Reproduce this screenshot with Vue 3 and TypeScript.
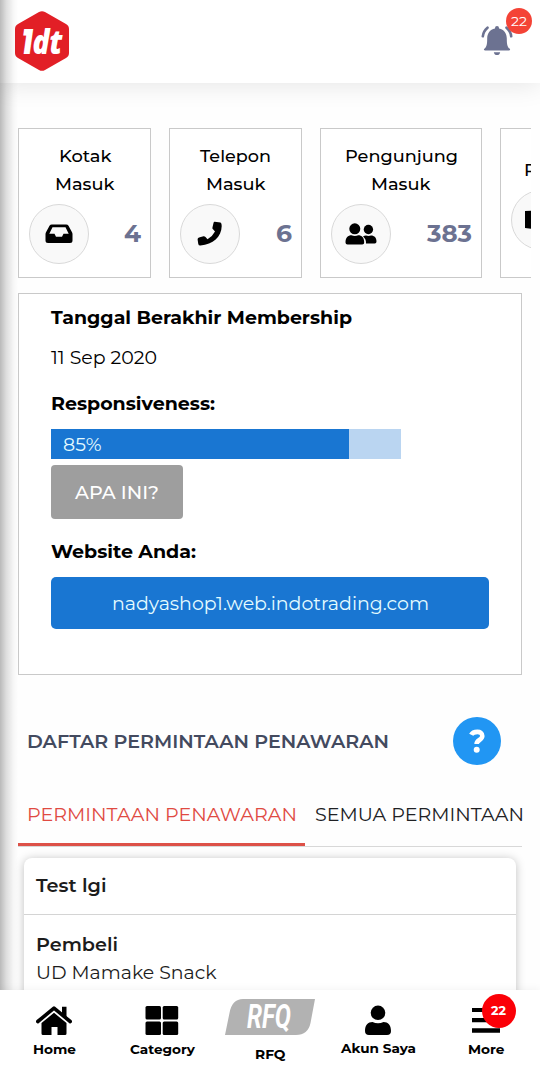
<script setup lang="ts">
import { h } from 'vue'

interface FitProps {
  text: string
  width: number
  size?: number
  weight?: number
  line?: number
}

const FitText = (p: FitProps) => {
  const size = Number(p.size ?? 18.6)
  const line = Number(p.line ?? 24)
  return h('svg', { width: p.width, height: line, class: 'fit' }, [
    h('text', {
      x: 0,
      y: line / 2 + size * 0.35,
      textLength: p.width,
      lengthAdjust: 'spacingAndGlyphs',
      'font-size': size,
      'font-weight': p.weight ?? 400,
      fill: 'currentColor',
    }, p.text),
  ])
}
FitText.props = ['text', 'width', 'size', 'weight', 'line']

interface Stat {
  icon: 'inbox' | 'phone' | 'users' | 'box'
  lines: { text: string; width: number }[]
  value: string
  valueWidth: number
}

const stats: Stat[] = [
  { icon: 'inbox', lines: [{ text: 'Kotak', width: 52.5 }, { text: 'Masuk', width: 59.5 }], value: '4', valueWidth: 17 },
  { icon: 'phone', lines: [{ text: 'Telepon', width: 71 }, { text: 'Masuk', width: 59.5 }], value: '6', valueWidth: 16 },
  { icon: 'users', lines: [{ text: 'Pengunjung', width: 113 }, { text: 'Masuk', width: 59.5 }], value: '383', valueWidth: 45 },
  { icon: 'box', lines: [{ text: 'Produk', width: 65 }], value: '', valueWidth: 0 },
]

const responsiveness = 85
</script>

<template>
  <div class="screen">
    <header class="topbar">
      <svg class="logo" width="56" height="62" viewBox="0 0 56 62">
        <path d="M25 2 Q28 .3 31 2 L52 14 Q55 15.700 55 19 V43 Q55 46.300 52 48 L31 60 Q28 61.700 25 60 L4 48 Q1 46.300 1 43 V19 Q1 15.700 4 14 Z" fill="#e21f26" />
        <text x="8" y="44" textLength="10.500" lengthAdjust="spacingAndGlyphs" class="logo-text logo-one">1</text>
        <text x="18.500" y="44" textLength="30" lengthAdjust="spacingAndGlyphs" class="logo-text">dt</text>
      </svg>
      <div class="bell">
        <svg width="32" height="30" viewBox="0 0 32 30">
          <path d="M14 2.500V2a2 2 0 0 1 4 0v.5c5.200 1.200 7.800 5 7.800 10 0 7 .8 8.500 2.900 10.300.8.700.4 1.700-.7 1.700H4c-1.100 0-1.500-1-.7-1.700 2.100-1.800 2.900-3.300 2.900-10.300 0-5 2.600-8.800 7.800-10Z" fill="#6c7291" />
          <path d="M12.800 26.200h6.400c-.4 2-1.600 2.900-3.200 2.900s-2.800-.9-3.200-2.900Z" fill="#6c7291" />
          <path d="M6.500 1.700C3.700 4 2.200 6.500 1.800 10.300M25.500 1.700c2.800 2.300 4.300 4.800 4.700 8.600" fill="none" stroke="#6c7291" stroke-width="2.600" stroke-linecap="round" />
        </svg>
        <span class="bell-count"><FitText text="22" :width="16" :size="13.500" :line="18" /></span>
      </div>
    </header>

    <section class="stats">
      <article v-for="(s, i) in stats" :key="i" class="stat" :class="`stat-${s.icon}`">
        <FitText v-for="l in s.lines" :key="l.text" :text="l.text" :width="l.width" :size="17.500" :weight="500" :line="28" />
        <div class="stat-foot">
          <span class="disc">
            <svg v-if="s.icon === 'inbox'" width="28" height="20" viewBox="0 0 28 20">
              <path fill-rule="evenodd" d="M6.800.5h14.400q1.500 0 2.300 1.200L27 8.200q.5.900.5 2V16.500q0 2.500-2.500 2.500H3Q.5 19 .5 16.500V10.200q0-1.100.5-2L4.500 1.700Q5.300.5 6.800.5ZM7.500 3.300 4.300 9.800H9.500L11 12.700h6l1.500-2.900h5.200L20.500 3.300Z" />
            </svg>
            <svg v-else-if="s.icon === 'phone'" width="26" height="26" viewBox="0 0 26 26">
              <path d="M17.700.8 23.500 1.500Q24.800 2 24.700 5C24.500 16 16 23.500 3.500 24.500Q1.500 24.600 1.300 23L.6 18.500Q.5 17 2 16.500L6.500 15.200Q7.500 15 8.500 16L10.500 18.200Q15.500 15.500 18 10.500L16 8.300Q15 7.500 15.500 6.200L16.500 2Q16.800.7 17.700.8Z" />
            </svg>
            <svg v-else-if="s.icon === 'users'" width="32" height="22" viewBox="0 0 32 22">
              <circle cx="9.800" cy="5.800" r="5.500" />
              <circle cx="23.400" cy="6.500" r="4.700" />
              <path d="M.5 19.500C.5 14.700 3 12.300 6.500 12.300c2 .9 4.700.9 6.700 0 3.600 0 6 2.400 6 7.200q0 2-2 2H2.500q-2 0-2-2Z" />
              <path d="M18 13.600c1-.7 1.900-1 3-1 1.600.6 3.400.6 5 0 3.400 0 5.500 2.300 5.500 6q0 2-1.800 2H21q.3-4.500-3-7Z" />
            </svg>
            <svg v-else width="32" height="20" viewBox="0 0 32 20">
              <path d="M0 1 16 0 32 1V18L16 20 0 18Z" />
            </svg>
          </span>
          <FitText v-if="s.value" class="value" :text="s.value" :width="s.valueWidth" :size="24" :weight="700" :line="28" />
        </div>
      </article>
    </section>

    <section class="member">
      <FitText text="Tanggal Berakhir Membership" :width="301" :weight="700" />
      <FitText class="date" text="11 Sep 2020" :width="106" />
      <FitText class="resp" text="Responsiveness:" :width="164" :weight="700" />
      <div class="bar">
        <div class="bar-fill" :style="{ width: responsiveness + '%' }">
          <FitText :text="responsiveness + '%'" :width="38.500" />
        </div>
      </div>
      <button class="what"><FitText text="APA INI?" :width="84" :weight="500" /></button>
      <FitText class="site" text="Website Anda:" :width="145" :weight="700" />
      <a class="link"><FitText text="nadyashop1.web.indotrading.com" :width="317" /></a>
    </section>

    <section class="requests">
      <div class="heading">
        <FitText text="DAFTAR PERMINTAAN PENAWARAN" :width="362" :size="19" :weight="650" />
        <span class="help">
          <svg width="18" height="26" viewBox="0 0 18 26">
            <path d="M3.200 6.800C5 3.300 14.300 2 14.300 8c0 4-5.700 4-5.700 8" fill="none" stroke="#fff" stroke-width="4.600" />
            <circle cx="8.700" cy="21.800" r="3" fill="#fff" />
          </svg>
        </span>
      </div>
      <nav class="tabs">
        <span class="tab active"><FitText text="PERMINTAAN PENAWARAN" :width="270" :weight="450" /></span>
        <span class="tab"><FitText text="SEMUA PERMINTAAN" :width="209" :weight="450" /></span>
      </nav>
      <article class="request">
        <div class="request-title"><FitText text="Test lgi" :width="70.500" :weight="650" /></div>
        <div class="request-body">
          <FitText text="Pembeli" :width="82" :weight="650" :line="28" />
          <FitText text="UD Mamake Snack" :width="180.500" :weight="400" :line="28" />
        </div>
      </article>
    </section>

    <div class="edge"></div>

    <nav class="dock">
      <a class="dock-item">
        <svg width="36" height="30" viewBox="0 0 36 30">
          <path d="M1.800 15.500 18 2.200 34.200 15.500" fill="none" stroke="#000" stroke-width="3.600" stroke-linecap="round" stroke-linejoin="round" />
          <path d="M26 .8h4.500v12l-4.500-4Z" />
          <path d="M18 6.800 30.500 17V27.500q0 1.500-1.500 1.500H21.500V21h-6v8H7q-1.500 0-1.500-1.500V17Z" />
        </svg>
        <FitText text="Home" :width="43" :size="13.200" :weight="700" :line="18" />
      </a>
      <a class="dock-item">
        <svg width="36" height="30" viewBox="0 0 36 30">
          <rect x="1.500" y="0" width="15.500" height="13.500" rx="1.500" /><rect x="18.700" y="0" width="15.500" height="13.500" rx="1.500" />
          <rect x="1.500" y="15.500" width="15.500" height="13.500" rx="1.500" /><rect x="18.700" y="15.500" width="15.500" height="13.500" rx="1.500" />
        </svg>
        <FitText text="Category" :width="65" :size="13.200" :weight="700" :line="18" />
      </a>
      <a class="dock-item rfq">
        <svg width="90" height="37" viewBox="0 0 90 37">
          <path d="M18 0H90L85.500 24Q83 36 71 36H0L4.500 14Q7 0 18 0Z" fill="#b2b2b2" />
          <text x="22" y="28.500" textLength="44" lengthAdjust="spacingAndGlyphs" class="rfq-text">RFQ</text>
        </svg>
        <FitText text="RFQ" :width="30.500" :size="13.200" :weight="700" :line="18" />
      </a>
      <a class="dock-item akun">
        <svg width="28" height="31" viewBox="0 0 28 31">
          <circle cx="14" cy="7.800" r="7.300" />
          <path d="M1 26c0-6 3-9 7.500-9 3.500 1.600 7.500 1.600 11 0 4.500 0 7.500 3 7.500 9q0 4-4 4H5q-4 0-4-4Z" />
        </svg>
        <FitText text="Akun Saya" :width="75" :size="13.200" :weight="700" :line="18" />
      </a>
      <a class="dock-item">
        <svg width="28" height="30" viewBox="0 0 28 30">
          <path d="M0 2h28v4H0ZM0 12h28v4.200H0ZM0 22.200h28v4.500H0Z" />
        </svg>
        <span class="more-count"><FitText text="22" :width="15" :size="12" :weight="700" :line="18" /></span>
        <FitText text="More" :width="36.500" :size="13.200" :weight="700" :line="18" />
      </a>
    </nav>
  </div>
</template>

<style>
body { margin: 0; background: #fff; overflow: hidden; }
.fit { display: block; flex: none; overflow: visible; }
</style>

<style scoped>
.screen {
  position: relative;
  width: 540px;
  height: 1073px;
  overflow: hidden;
  box-sizing: border-box;
  background: #fefefe;
  color: #000;
  font-family: Montserrat, Inter, "Liberation Sans", sans-serif;
}
.topbar {
  display: flex;
  justify-content: space-between;
  height: 83px;
  padding: 10px 27px 0 14px;
  box-sizing: border-box;
  background: #fff;
  box-shadow: 0 2px 24px rgba(0, 0, 0, 0.1);
}
.logo, .rfq svg { overflow: visible; }
.logo-text {
  font: italic 800 34px "Open Sans", sans-serif;
  fill: #fff;
}
.logo-one { font: italic 900 36px Montserrat, "Open Sans", sans-serif; }
.bell { position: relative; padding-top: 16px; }
.bell-count {
  position: absolute;
  left: 25px;
  top: -2px;
  width: 26px;
  height: 26px;
  border-radius: 50%;
  display: grid;
  place-items: center;
  background: #f44336;
  color: #fff;
}
.stats {
  display: flex;
  gap: 18px;
  height: 150px;
  margin: 45px 9px 0 18px;
  overflow: hidden;
}
.stat {
  flex: none;
  display: flex;
  flex-direction: column;
  align-items: center;
  justify-content: center;
  width: 133px;
  box-sizing: border-box;
  border: 1px solid #c9c9c9;
  background: #fff;
}
.stat-inbox > .fit { margin-left: 1px; }
.stat-users { width: 162px; }
.stat-box { width: 113px; }
.stat-foot {
  display: flex;
  align-items: center;
  justify-content: space-between;
  align-self: stretch;
  margin-top: 6px;
  padding: 0 9px 0 10px;
}
.disc {
  display: grid;
  place-items: center;
  width: 60px;
  height: 60px;
  box-sizing: border-box;
  border: 1px solid #d9d9d9;
  border-radius: 50%;
  background: #f9f9f9;
}
.value { color: #6c7291; }
.member {
  display: flex;
  flex-direction: column;
  align-items: flex-start;
  width: 504px;
  height: 382px;
  margin: 15px 0 0 18px;
  padding: 11px 32px 0;
  box-sizing: border-box;
  border: 1px solid #c9c9c9;
  background: #fff;
}
.date { margin-top: 16px; }
.resp { margin-top: 22px; }
.bar {
  width: 350px;
  height: 30px;
  margin-top: 14px;
  background: #bad5f1;
}
.bar-fill {
  display: flex;
  align-items: center;
  height: 100%;
  padding: 0 0 1px 12px;
  box-sizing: border-box;
  background: #1976d2;
  color: #e4fbff;
}
.what {
  display: grid;
  place-items: center;
  width: 132px;
  height: 54px;
  margin-top: 6px;
  padding: 0;
  border: 0;
  border-radius: 4px;
  background: #9e9e9e;
  color: #fff;
  font-family: inherit;
}
.site { margin-top: 20px; }
.link {
  display: grid;
  place-items: center;
  width: 438px;
  height: 52px;
  margin-top: 14px;
  border-radius: 5px;
  background: #1976d2;
  color: #e4fbff;
}
.requests { padding: 42px 18px 0; }
.heading {
  display: flex;
  align-items: center;
  justify-content: space-between;
  padding: 0 21px 0 9px;
  color: #434a5f;
}
.help {
  display: grid;
  place-items: center;
  width: 48px;
  height: 48px;
  border-radius: 50%;
  background: #2196f3;
}
.tabs {
  display: flex;
  height: 64px;
  margin-top: 18px;
  box-sizing: border-box;
  border-bottom: 1px solid #d8d8d8;
}
.tab { flex: none; padding: 19px 0 0 9.5px; color: #202124; }
.tab.active {
  width: 287px;
  height: 63px;
  padding-left: 9px;
  box-sizing: border-box;
  border-bottom: 3px solid #dd5148;
  color: #e04a42;
}
.request {
  height: 200px;
  margin: 11px 6px 0;
  border-radius: 8px;
  background: #fff;
  box-shadow: 0 1px 10px rgba(0, 0, 0, 0.25);
  color: #1c1c1c;
}
.request-title { padding: 15px 12px 17px; border-bottom: 1px solid #d4d4d4; }
.request-body { padding: 15px 12px; }
.edge {
  position: absolute;
  left: 0;
  top: 0;
  width: 18px;
  height: 991px;
  background: linear-gradient(90deg, rgba(0, 0, 0, 0.27), rgba(0, 0, 0, 0.13) 35%, rgba(0, 0, 0, 0.03) 75%, transparent);
}
.dock {
  position: absolute;
  left: 0;
  bottom: 0;
  display: flex;
  width: 540px;
  height: 83px;
  background: #fff;
  box-shadow: 0 -1px 8px rgba(0, 0, 0, 0.05);
}
.dock-item {
  position: relative;
  display: flex;
  flex-direction: column;
  align-items: center;
  width: 108px;
  padding-top: 16px;
  box-sizing: border-box;
}
.dock-item > .fit { margin-top: 3.5px; }
.rfq { padding-top: 9px; }
.rfq > .fit { margin-top: 8.5px; }
.akun { padding-top: 15px; }
.akun > .fit { margin-top: 2.5px; }
.rfq-text {
  font: italic 700 33px Roboto, sans-serif;
  fill: #fff;
}
.more-count {
  position: absolute;
  left: 49.5px;
  top: 4px;
  width: 34px;
  height: 34px;
  border-radius: 50%;
  display: grid;
  place-items: center;
  background: #fb0007;
  color: #fff;
}
</style>
